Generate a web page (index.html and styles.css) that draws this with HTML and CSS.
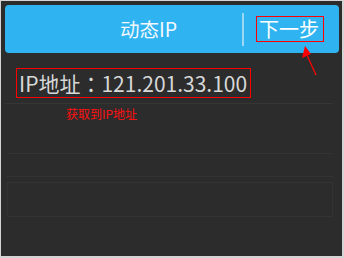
FILE: index.html
```html
<!DOCTYPE html>
<html>
<head>
<meta charset="utf-8">
<link rel="stylesheet" href="styles.css">
</head>
<body>
<div class="frame">
  <div class="panel">
    <header class="bar">
      <div class="title">动态IP</div>
      <div class="sep"></div>
      <div class="next"><span class="mark">下一步</span></div>
    </header>
    <div class="row ip-row">
      <span class="ip mark">IP地址：121.201.33.100</span>
    </div>
    <div class="caption">获取到IP地址</div>
    <div class="ghost g1"></div>
    <div class="ghost g2"></div>
  </div>
  <svg class="arrow" width="344" height="258" viewBox="0 0 344 258">
    <line x1="316" y1="75" x2="307" y2="55" stroke="#ff0000" stroke-width="1.3"/>
    <polygon points="305,46 302,58 311,54" fill="#ff0000"/>
  </svg>
</div>
</body>
</html>
```
FILE: styles.css
```css
html, body {
  margin: 0;
  padding: 0;
  width: 344px;
  height: 258px;
  overflow: hidden;
  background: #d4d4d4;
}
.frame {
  position: relative;
  width: 344px;
  height: 258px;
  box-sizing: border-box;
  padding: 1px 2px 2px 1px;
}
.panel {
  height: 100%;
  box-sizing: border-box;
  background: #2c2c2c;
  padding: 4px 3px 0 4px;
  font-family: "Noto Sans CJK SC", "Noto Sans", sans-serif;
  display: flex;
  flex-direction: column;
}
.bar {
  height: 48px;
  flex: none;
  background: #2fb4f1;
  border-radius: 4px;
  display: flex;
  align-items: center;
  box-sizing: border-box;
}
.title {
  flex: 1;
  text-align: center;
  color: #f2f8fc;
  font-size: 19.5px;
  padding-left: 50px;
  line-height: 24px;
}
.sep {
  width: 2px;
  height: 33px;
  background: #9ad9f6;
  margin: 0 12px 0 0;
}
.next {
  width: 83px;
  color: #ffffff;
  font-size: 20px;
  line-height: 24px;
}
.mark {
  border: 1px solid #ff0000;
}
.next .mark {
  display: inline-block;
  padding: 0 4px 0 2px;
  margin-left: 0;
}
.ip-row {
  margin-top: 15px;
  height: 36px;
  flex: none;
  box-sizing: border-box;
  border-bottom: 1px solid #363636;
  display: flex;
  align-items: flex-start;
  margin-right: 6px;
}
.ip {
  display: inline-block;
  color: #d8d8d8;
  font-size: 21px;
  line-height: 28px;
  padding: 0 3px 0 2px;
  margin-left: 11px;
  font-family: "Noto Sans CJK TC", "Open Sans", sans-serif;
}
.caption {
  color: #ff1010;
  font-size: 12px;
  line-height: 14px;
  margin: 3px 0 0 61px;
}
.ghost {
  border: 1px solid #333333;
  margin-right: 6px;
  margin-left: 2px;
  flex: none;
}
.g1 {
  margin-top: 32px;
  height: 22px;
  border-left: none;
  border-right: none;
}
.g2 {
  margin-top: 5px;
  height: 33px;
}
.arrow {
  position: absolute;
  left: 0;
  top: 0;
  pointer-events: none;
}
```
